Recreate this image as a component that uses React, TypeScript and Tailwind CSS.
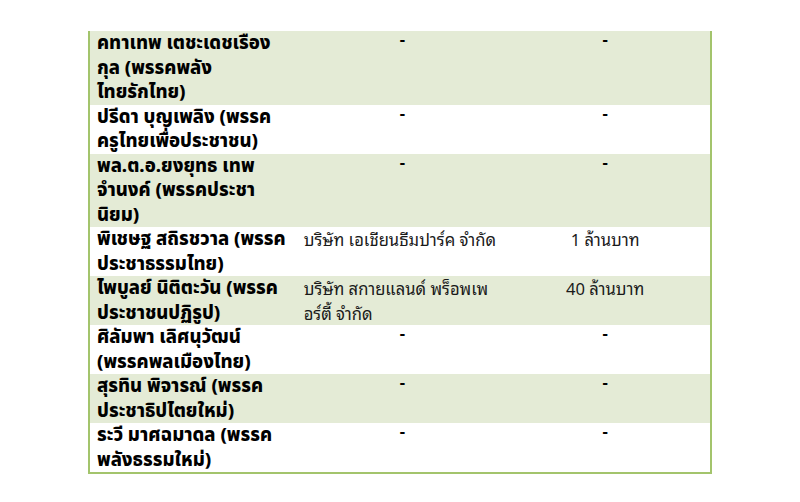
type Row = {
  name: string[];
  company: string[];
  amount: string;
  shaded: boolean;
};

const rows: Row[] = [
  { name: ["คทาเทพ เตชะเดชเรือง", "กุล (พรรคพลัง", "ไทยรักไทย)"], company: ["-"], amount: "-", shaded: true },
  { name: ["ปรีดา บุญเพลิง (พรรค", "ครูไทยเพื่อประชาชน)"], company: ["-"], amount: "-", shaded: false },
  { name: ["พล.ต.อ.ยงยุทธ เทพ", "จำนงค์ (พรรคประชา", "นิยม)"], company: ["-"], amount: "-", shaded: true },
  { name: ["พิเชษฐ สถิรชวาล (พรรค", "ประชาธรรมไทย)"], company: ["บริษัท เอเชียนธีมปาร์ค จำกัด"], amount: "1 ล้านบาท", shaded: false },
  { name: ["ไพบูลย์ นิติตะวัน (พรรค", "ประชาชนปฏิรูป)"], company: ["บริษัท สกายแลนด์ พร็อพเพ", "อร์ตี้ จำกัด"], amount: "40 ล้านบาท", shaded: true },
  { name: ["ศิลัมพา เลิศนุวัฒน์", "(พรรคพลเมืองไทย)"], company: ["-"], amount: "-", shaded: false },
  { name: ["สุรทิน พิจารณ์ (พรรค", "ประชาธิปไตยใหม่)"], company: ["-"], amount: "-", shaded: true },
  { name: ["ระวี มาศฉมาดล (พรรค", "พลังธรรมใหม่)"], company: ["-"], amount: "-", shaded: false },
];

const Dash = () => <div className="leading-[14px] text-center font-bold text-black">-</div>;

const App = () => {
  return (
    <div className="w-[800px] h-[502px] bg-white pt-[31px] pl-[88px]">
      <div className="w-[624px] border-l-2 border-r-2 border-b-2 border-[#a3c46c]">
        {rows.map((r, i) => (
          <div
            key={i}
            className={`grid grid-cols-3 leading-[24.5px] whitespace-nowrap ${r.shaded ? "bg-[#e4ebd6]" : "bg-white"}`}
          >
            <div className="pl-[7px] font-extrabold text-[18.5px] text-black font-['Noto_Sans_Thai','Noto_Sans',sans-serif]">
              {r.name.map((l, j) => (
                <div key={j}>{l}</div>
              ))}
            </div>
            <div className="pl-[5px] text-[16.6px] text-[#1a1a1a] font-['Noto_Sans_Thai_Looped','Noto_Sans_Thai',sans-serif]">
              {r.company[0] === "-" ? (
                <Dash />
              ) : (
                r.company.map((l, j) => <div key={j} className="pl-[2px]">{l}</div>)
              )}
            </div>
            <div className="pr-[3px] text-center text-[16.6px] text-[#1a1a1a] font-['Noto_Sans_Thai_Looped','Noto_Sans_Thai',sans-serif]">
              {r.amount === "-" ? <Dash /> : r.amount}
            </div>
          </div>
        ))}
      </div>
    </div>
  );
};

export default App;
